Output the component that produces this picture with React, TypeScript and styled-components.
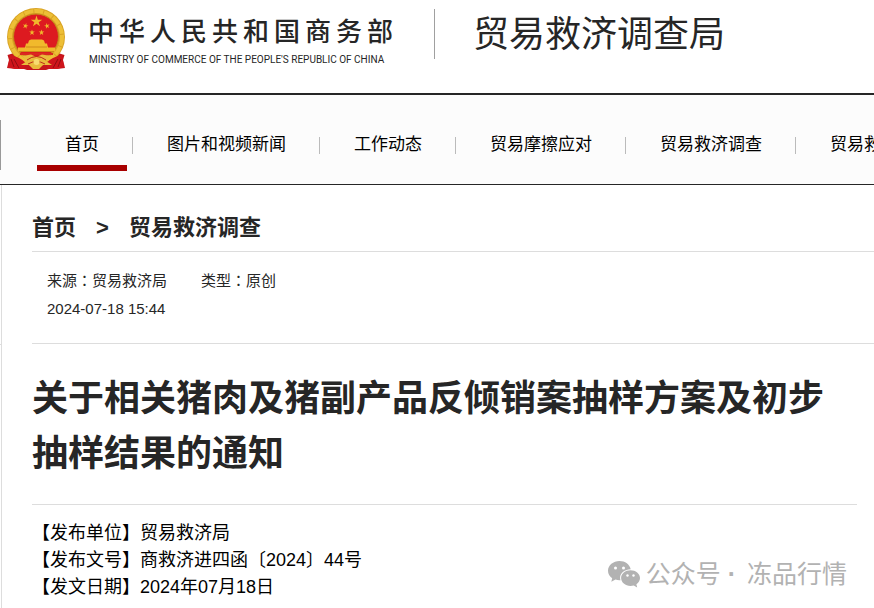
import React from "react";
import styled, { createGlobalStyle } from "styled-components";

const sans = `"Liberation Sans", "Noto Sans CJK SC", sans-serif`;

const GlobalStyle = createGlobalStyle`
  * { box-sizing: border-box; }
  body {
    margin: 0;
    background: #fff;
    color: #262626;
    font-family: ${sans};
    overflow: hidden;
  }
`;

const Page = styled.div`
  position: relative;
  display: flex;
  flex-direction: column;
  min-height: 100vh;
  overflow: hidden;
`;

const Header = styled.header`
  display: flex;
  align-items: flex-start;
  padding: 8px 0 21px 6px;
  border-bottom: 2px solid #262626;
`;

const Emblem = styled.svg`
  flex: none;
  width: 60px;
  height: 64px;
`;

const Ministry = styled.a`
  display: flex;
  flex-direction: column;
  margin-left: 22px;
  color: #262626;
  text-decoration: none;
  white-space: nowrap;
`;

const MinistryName = styled.span`
  font-size: 26px;
  font-weight: 500;
  line-height: 48px;
  letter-spacing: 5px;
`;

const MinistryEnglish = styled.span`
  padding: 0 1px;
  font-family: Roboto, sans-serif;
  font-size: 10px;
  line-height: 8px;
`;

const Bureau = styled.h1`
  margin: 1px 0 0 36px;
  padding-left: 38px;
  border-left: 1px solid #a0a0a0;
  font-size: 36px;
  font-weight: 400;
  line-height: 52px;
  height: 50px;
  white-space: nowrap;
`;

const Nav = styled.nav`
  background: #fcfcfc;
  border-bottom: 1px solid #262626;
  padding: 25px 0 14px;
`;

const NavList = styled.ul`
  display: flex;
  height: 50px;
  margin: 0;
  padding: 0 0 0 30px;
  border-left: 1px solid #999;
  list-style: none;
`;

const NavItem = styled.li`
  display: flex;
  flex: none;
  align-items: flex-start;
  padding: 0 5px 0 6px;

  & + &::before {
    content: "";
    width: 1px;
    height: 17px;
    margin: 17px 6px 0 -6px;
    background: #bbb;
  }
`;

const NavLink = styled.a<{ $active?: boolean }>`
  padding: 11px 28px 6px;
  border-bottom: 6px solid ${(p) => (p.$active ? "#a80000" : "transparent")};
  color: #000;
  font-size: 17px;
  line-height: 28px;
  text-decoration: none;
  white-space: nowrap;
`;

const Body = styled.div`
  display: flex;
  flex: 1;
`;

const Gutter = styled.div`
  width: 2px;
  padding-top: 159px;
  border-right: 1px solid #ddd;

  &::before {
    content: "";
    display: block;
    height: 1px;
    background: #ddd;
  }
`;

const Article = styled.main`
  flex: 1;
  min-width: 0;
  padding: 23px 0 0 30px;
`;

const Breadcrumb = styled.nav`
  display: flex;
  gap: 20px;
  padding-bottom: 3px;
  border-bottom: 1px solid #ddd;
  font-size: 22px;
  font-weight: 700;
  line-height: 40px;

  a {
    color: inherit;
    text-decoration: none;
  }
`;

const Meta = styled.div`
  display: flex;
  flex-direction: column;
  padding: 15px 15px 20px;
  border-bottom: 1px solid #ddd;
  font-size: 15px;
  line-height: 28px;
`;

const MetaRow = styled.div`
  display: flex;
  gap: 34px;
`;

const Colon = styled.span`
  font-family: "Noto Sans CJK TC", sans-serif;
  line-height: 1;
`;

const Title = styled.h2`
  margin: 27px 17px 0 0;
  padding-bottom: 23px;
  border-bottom: 1px solid #ddd;
  font-size: 36px;
  font-weight: 700;
  line-height: 55px;
`;

const Notice = styled.div`
  padding-top: 15px;
  color: #000;
  font-size: 18px;
  line-height: 27px;

  p {
    margin: 0;
  }
`;

const Watermark = styled.div`
  position: absolute;
  right: 27px;
  bottom: 16px;
  display: flex;
  align-items: center;
  gap: 6px;
  color: #b2b2b2;
  font-size: 25px;
  line-height: 36px;

  svg {
    width: 32px;
    height: 27px;
  }
`;

const WatermarkText = styled.span`
  display: flex;
  gap: 7px;
`;

const Dot = styled.span`
  padding-right: 4px;
  font-weight: 700;
`;

const STAR = "M0 -1 L.225 -.309 L.951 -.309 L.363 .118 L.588 .809 L0 .382 L-.588 .809 L-.363 .118 L-.951 -.309 L-.225 -.309Z";

function NationalEmblem() {
  return (
    <Emblem viewBox="0 0 60 64" aria-hidden="true">
      <path d="M8 45 L1.500 47 L3 52 L1 60 L10 61 L15 60 L21 62 L40 62 L46 60 L51 61 L59 60 L57 52 L58.500 47 L52 45Z" fill="#c5161c" />
      <circle cx="30" cy="29" r="29" fill="#d9a324" />
      <circle cx="30" cy="29" r="26" fill="none" stroke="#edbf36" strokeWidth="4" strokeDasharray="9 1" />
      <circle cx="30" cy="28.500" r="22.500" fill="#dd1a20" stroke="#c48a1a" strokeWidth="1" />
      <path d="M4 47 Q14 49 20 55 L18 61 L9 61 L2 59Z M56 47 Q46 49 40 55 L42 61 L51 61 L58 59Z" fill="#cf151c" />
      <path d="M8 51l5 9M5 51l3 8M52 51l-5 9M55 51l-3 8" stroke="#8f0d12" strokeWidth="1" />
      <g fill="#f1b92c">
        <path d={STAR} transform="translate(30.500 13.500) scale(6)" />
        <path d={STAR} transform="translate(19.500 18) rotate(15) scale(3)" />
        <path d={STAR} transform="translate(41 18) rotate(-15) scale(3)" />
        <path d={STAR} transform="translate(26 24.500) scale(3)" />
        <path d={STAR} transform="translate(35.500 24.500) scale(3)" />
        <path d="M23 32.500 L25 31.500h11l2 1 1 3H22z M20 35.500h21l1 4H19z M12 39.500h37v4H12z" />
      </g>
      <path d="M13 43.500h35M20 39h21" stroke="#cf8b18" strokeWidth="1" />
      <path d="M14 46h33" stroke="#d92920" strokeWidth="2" />
      <path d="M16 48 L25 46.500 L30.500 49 L36 46.500 L45 48 L40 53 L46 57 L37 57 L33 61 L27 61 L23 57 L15 57 L21 53Z" fill="#e9bb3c" />
      <path d="M21 52 Q30.500 45 40 52 M22 56 Q30.500 51 39 56" fill="none" stroke="#bd2b1a" strokeWidth="1" />
      <circle cx="30.500" cy="54" r="3" fill="#f8db70" />
    </Emblem>
  );
}

function ChatBubbles() {
  return (
    <svg viewBox="0 0 32 27" aria-hidden="true">
      <path
        d="M11.500 0C5.200 0 0 4.300 0 9.700c0 3 1.600 5.700 4.200 7.500L3.300 20.800l4.200-2.200c1.300.4 2.600.6 4 .6h1c-.3-.8-.4-1.600-.4-2.400C12.100 12 16.800 8.200 22.700 8.200C21.800 3.500 17.100 0 11.500 0z"
        fill="currentColor"
      />
      <path
        d="M22.500 9.200c-5.200 0-9.400 3.500-9.400 7.900S17.300 25 22.500 25c1.100 0 2.200-.2 3.200-.5l3.500 2-.8-3.200c2.200-1.500 3.600-3.700 3.600-6.200C32 12.700 27.700 9.200 22.500 9.200z"
        fill="currentColor"
      />
      <g fill="#fff">
        <circle cx="7.500" cy="7" r="1.500" />
        <circle cx="15.500" cy="7" r="1.500" />
        <circle cx="19.500" cy="14.500" r="1.200" />
        <circle cx="25.500" cy="14.500" r="1.200" />
      </g>
    </svg>
  );
}

const sections = ["首页", "图片和视频新闻", "工作动态", "贸易摩擦应对", "贸易救济调查", "贸易救济"];

const notice = [
  "【发布单位】贸易救济局",
  "【发布文号】商救济进四函〔2024〕44号",
  "【发文日期】2024年07月18日",
];

export default function App() {
  return (
    <Page lang="zh-CN">
      <GlobalStyle />
      <Header>
        <NationalEmblem />
        <Ministry href="#">
          <MinistryName>中华人民共和国商务部</MinistryName>
          <MinistryEnglish>MINISTRY OF COMMERCE OF THE PEOPLE'S REPUBLIC OF CHINA</MinistryEnglish>
        </Ministry>
        <Bureau>贸易救济调查局</Bureau>
      </Header>
      <Nav aria-label="主导航">
        <NavList>
          {sections.map((name, i) => (
            <NavItem key={name}>
              <NavLink href="#" $active={i === 0}>{name}</NavLink>
            </NavItem>
          ))}
        </NavList>
      </Nav>
      <Body>
        <Gutter />
        <Article>
          <Breadcrumb aria-label="当前位置">
            <a href="#">首页</a>
            <span>&gt;</span>
            <a href="#">贸易救济调查</a>
          </Breadcrumb>
          <Meta>
            <MetaRow>
              <span>来源<Colon lang="zh-TW">：</Colon>贸易救济局</span>
              <span>类型<Colon lang="zh-TW">：</Colon>原创</span>
            </MetaRow>
            <time dateTime="2024-07-18T15:44">2024-07-18 15:44</time>
          </Meta>
          <Title>关于相关猪肉及猪副产品反倾销案抽样方案及初步抽样结果的通知</Title>
          <Notice>
            {notice.map((line) => (
              <p key={line}>{line}</p>
            ))}
          </Notice>
        </Article>
      </Body>
      <Watermark>
        <ChatBubbles />
        <WatermarkText>
          <span>公众号</span>
          <Dot>·</Dot>
          <span>冻品行情</span>
        </WatermarkText>
      </Watermark>
    </Page>
  );
}
